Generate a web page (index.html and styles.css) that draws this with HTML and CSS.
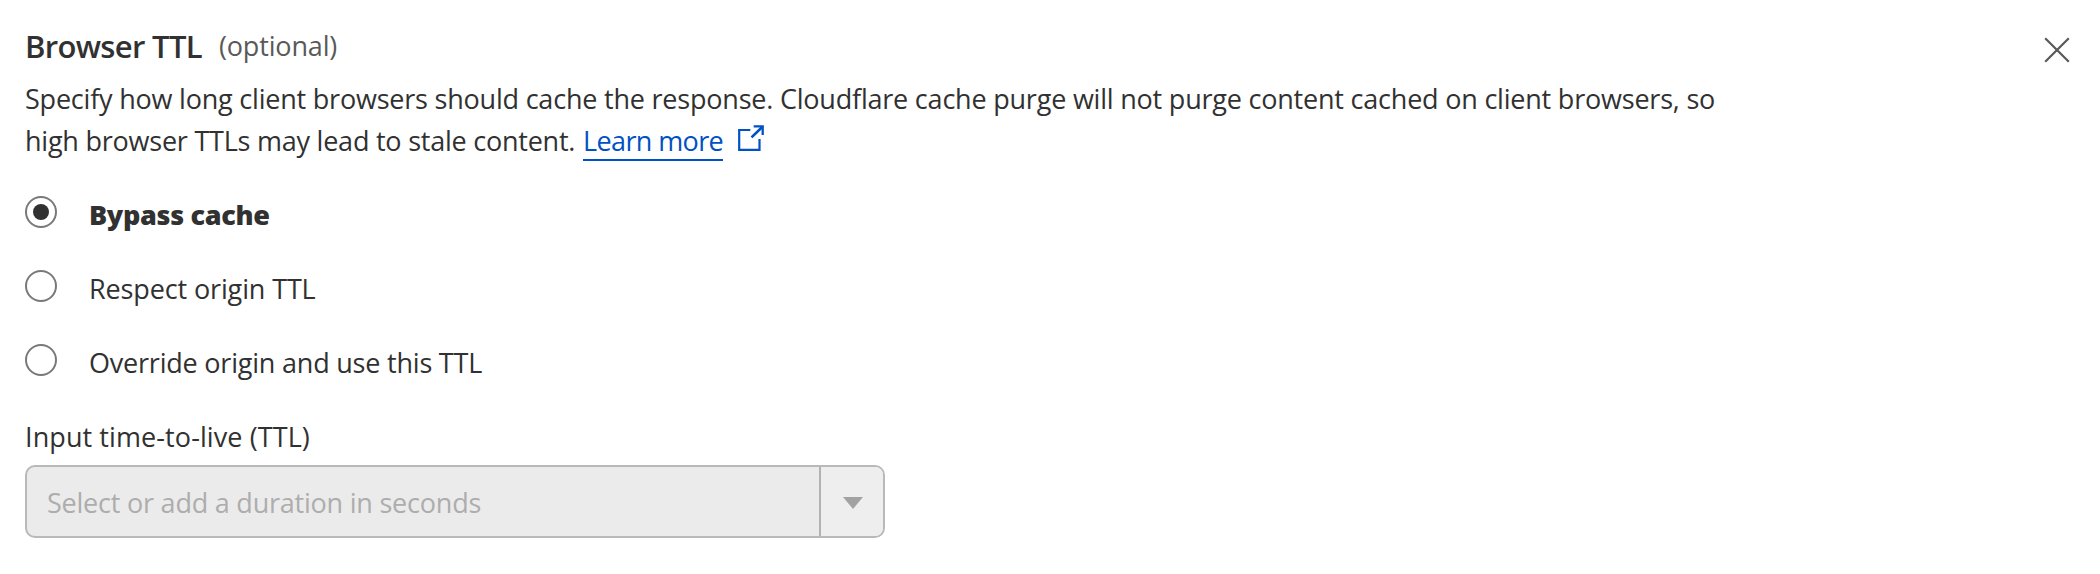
FILE: index.html
```
<!DOCTYPE html>
<html lang="en">
<head>
<meta charset="utf-8">
<title>Browser TTL</title>
<link rel="stylesheet" href="styles.css">
</head>
<body>
<section class="panel">
  <div class="content">
    <header class="heading">
      <h2 class="title">Browser TTL</h2>
      <span class="optional">(optional)</span>
    </header>
    <p class="description"><span>Specify how long client browsers should cache the response. Cloudflare cache purge will not purge content cached on client browsers, so</span><br><span class="line-end">high browser TTLs may lead to stale content.</span> <a class="link" href="#">Learn more</a><svg class="external" width="26" height="26" viewBox="0 0 26 26" fill="none" stroke="currentColor"><path d="M12.3 5H1.2V24.9H21.5V14" stroke-width="2.2"/><path d="M13.5 12.4L24 2.2" stroke-width="2.6"/><path d="M15.7 1.4H24.7V10" stroke-width="2.3"/></svg></p>
    <div class="options" role="radiogroup">
      <label class="option option--selected"><span class="radio radio--on"></span><span class="option-text">Bypass cache</span></label>
      <label class="option"><span class="radio"></span><span class="option-text respect">Respect origin TTL</span></label>
      <label class="option"><span class="radio"></span><span class="option-text">Override origin and use this TTL</span></label>
    </div>
    <div class="field-label">Input time-to-live (TTL)</div>
    <div class="select">
      <div class="select-value">Select or add a duration in seconds</div>
      <div class="select-toggle"><svg width="20" height="12" viewBox="0 0 20 12"><path d="M0 0H20L10 12Z" fill="#a2a2a2"/></svg></div>
    </div>
  </div>
  <button class="close" aria-label="Close"><svg width="26" height="26" viewBox="0 0 26 26"><path d="M1.2 1.2L24.8 24.8M24.8 1.2L1.2 24.8" stroke="#595959" stroke-width="2.2" fill="none"/></svg></button>
</section>
</body>
</html>
```

FILE: styles.css
```
* { box-sizing: border-box; }
body {
  margin: 0;
  background: #fff;
  color: #313131;
  font: 27px/42px "Open Sans", "Noto Sans", sans-serif;
  letter-spacing: -0.21px;
}
.panel {
  display: flex;
  justify-content: space-between;
  align-items: flex-start;
  height: 574px;
  padding: 26px 30px 0 25px;
}
.heading {
  display: flex;
  align-items: flex-start;
  gap: 17px;
  height: 52px;
}
.title {
  margin: 0;
  font-size: 31px;
  font-weight: 600;
  line-height: 40px;
  letter-spacing: -0.67px;
}
.optional {
  line-height: 40px;
  color: #595959;
  letter-spacing: -0.15px;
}
.description {
  margin: 0;
  white-space: nowrap;
}
.line-end { letter-spacing: -0.23px; }
.link {
  color: #0051c3;
  text-decoration: none;
  border-bottom: 2px solid #0051c3;
  letter-spacing: -0.62px;
  margin-left: 1px;
}
.external {
  margin-left: 15px;
  color: #0051c3;
}
.options {
  display: grid;
  gap: 32px;
  margin-top: 32px;
}
.option {
  display: flex;
  align-items: flex-start;
  gap: 32px;
  height: 42px;
}
.radio {
  display: grid;
  place-items: center;
  width: 32px;
  height: 32px;
  margin-top: 2px;
  border: 2px solid #797979;
  border-radius: 50%;
}
.radio--on::after {
  content: "";
  width: 16px;
  height: 16px;
  border-radius: 50%;
  background: #313131;
}
.option--selected .option-text {
  font-weight: 800;
  letter-spacing: -0.33px;
}
.respect { letter-spacing: -0.13px; }
.field-label {
  margin-top: 32px;
  letter-spacing: 0.09px;
}
.select {
  display: flex;
  width: 860px;
  height: 73px;
  margin-top: 7px;
  border: 2px solid #b9b9b9;
  border-radius: 10px;
  background: #ebebeb;
  overflow: hidden;
}
.select-value {
  flex: 1;
  padding: 15px 20px 12px;
  line-height: 42px;
  color: #adadad;
  letter-spacing: -0.22px;
}
.select-toggle {
  display: flex;
  align-items: flex-start;
  justify-content: center;
  width: 64px;
  padding: 30px 0 0 2px;
  border-left: 2px solid #b2b2b2;
  background: #eee;
}
.close {
  display: flex;
  margin-top: 11px;
  padding: 0;
  border: 0;
  background: none;
}
```
